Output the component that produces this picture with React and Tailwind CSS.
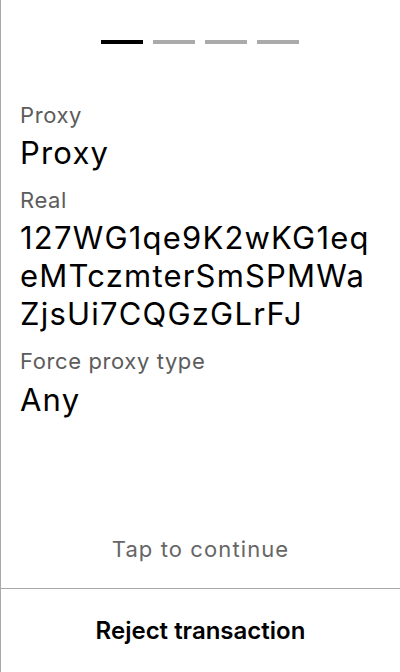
export default function App() {
  const font = { fontFamily: "Inter, 'Noto Sans', sans-serif" };
  const label = "text-[22px] leading-[28px] tracking-[0.6px] text-[#5c5c5c]";
  const value = "text-[31px] leading-[38px] tracking-[1.2px] text-black";
  return (
    <div style={font} className="w-[400px] h-[672px] bg-white border-l border-[#a9a9a9] flex flex-col overflow-hidden">
      <div className="flex justify-center gap-[10px] pt-[40px] pr-[1px]">
        <div className="w-[42px] h-[4px] bg-black" />
        <div className="w-[42px] h-[4px] bg-[#aaaaaa]" />
        <div className="w-[42px] h-[4px] bg-[#aaaaaa]" />
        <div className="w-[42px] h-[4px] bg-[#aaaaaa]" />
      </div>
      <div className="flex flex-col pl-[19px] pr-[10px] pt-[57px] flex-1">
        <div className={label}>Proxy</div>
        <div className={value + " mt-[5px]"}>Proxy</div>
        <div className={label + " mt-[14px]"}>Real</div>
        <div className={value + " mt-[5px]"}>
          <div>127WG1qe9K2wKG1eq</div>
          <div>eMTczmterSmSPMWa</div>
          <div>ZjsUi7CQGzGLrFJ</div>
        </div>
        <div className={label + " mt-[14px]"}>Force proxy type</div>
        <div className={value + " mt-[6px]"}>Any</div>
      </div>
      <div className="text-center text-[22px] leading-[28px] tracking-[1.1px] text-[#666666] pb-[25px]">Tap to continue</div>
      <div className="border-t border-[#a9a9a9] h-[84px] flex items-center justify-center">
        <span className="text-[24px] leading-[32px] font-semibold text-black">Reject transaction</span>
      </div>
    </div>
  );
}
